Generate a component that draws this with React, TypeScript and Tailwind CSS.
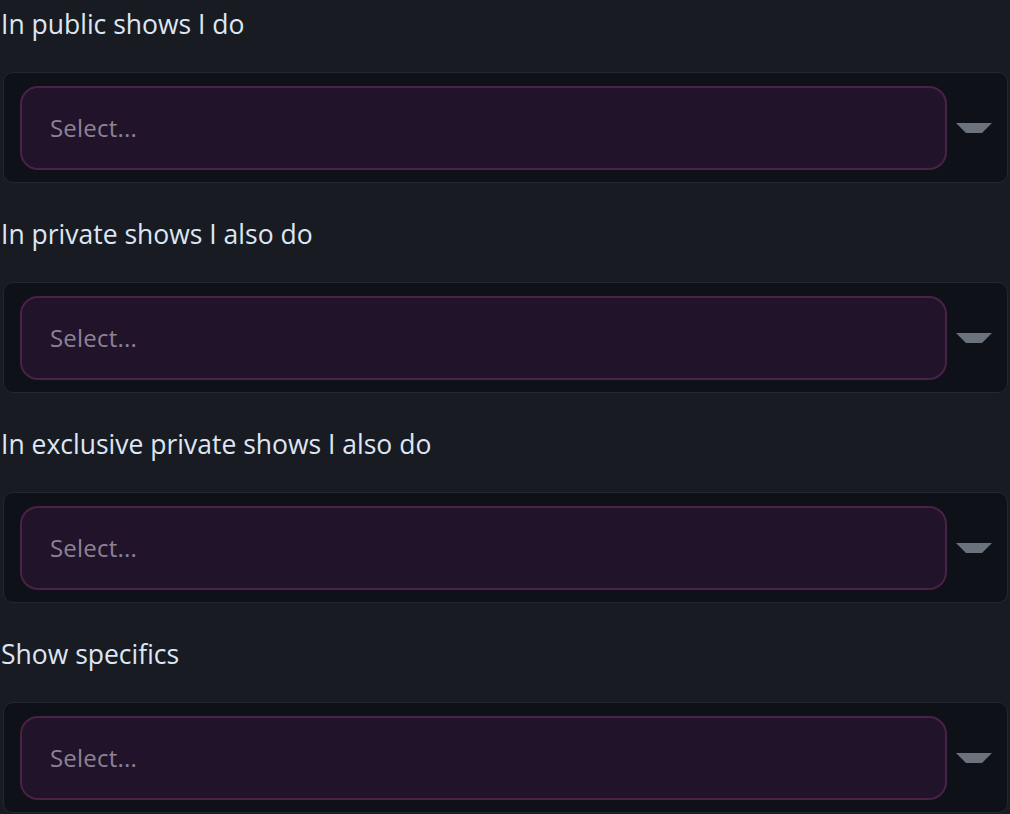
const fields = [
  "In public shows I do",
  "In private shows I also do",
  "In exclusive private shows I also do",
  "Show specifics",
];

function Caret() {
  return (
    <svg width="36" height="10" viewBox="0 0 36 10" className="block">
      <polygon points="0,0 36,0 26,10 10,10" fill="#6b727c" />
    </svg>
  );
}

function SelectField({ label }: { label: string }) {
  return (
    <div className="pb-[27px]">
      <div className="h-12 flex items-center pt-[2px] pl-[1px] text-[26.5px] text-[#dde6f4]">{label}</div>
      <div className="mt-6 ml-[3px] mr-[2px] h-[111px] flex items-center rounded-[10px] border border-[#23272f] bg-[#0e1117] pl-4 pr-[15px]">
        <div className="flex-1 h-[84px] flex items-center rounded-[18px] border-2 border-[#4b2145] bg-[#21142a] pl-7 text-[24px] tracking-[0.2px] text-[#8c8296]">
          Select...
        </div>
        <div className="w-[45px] flex justify-end">
          <Caret />
        </div>
      </div>
    </div>
  );
}

export default function App() {
  return (
    <div className="min-h-screen bg-[#181b22] font-['Open_Sans',sans-serif] overflow-hidden">
      {fields.map((f) => (
        <SelectField key={f} label={f} />
      ))}
    </div>
  );
}
